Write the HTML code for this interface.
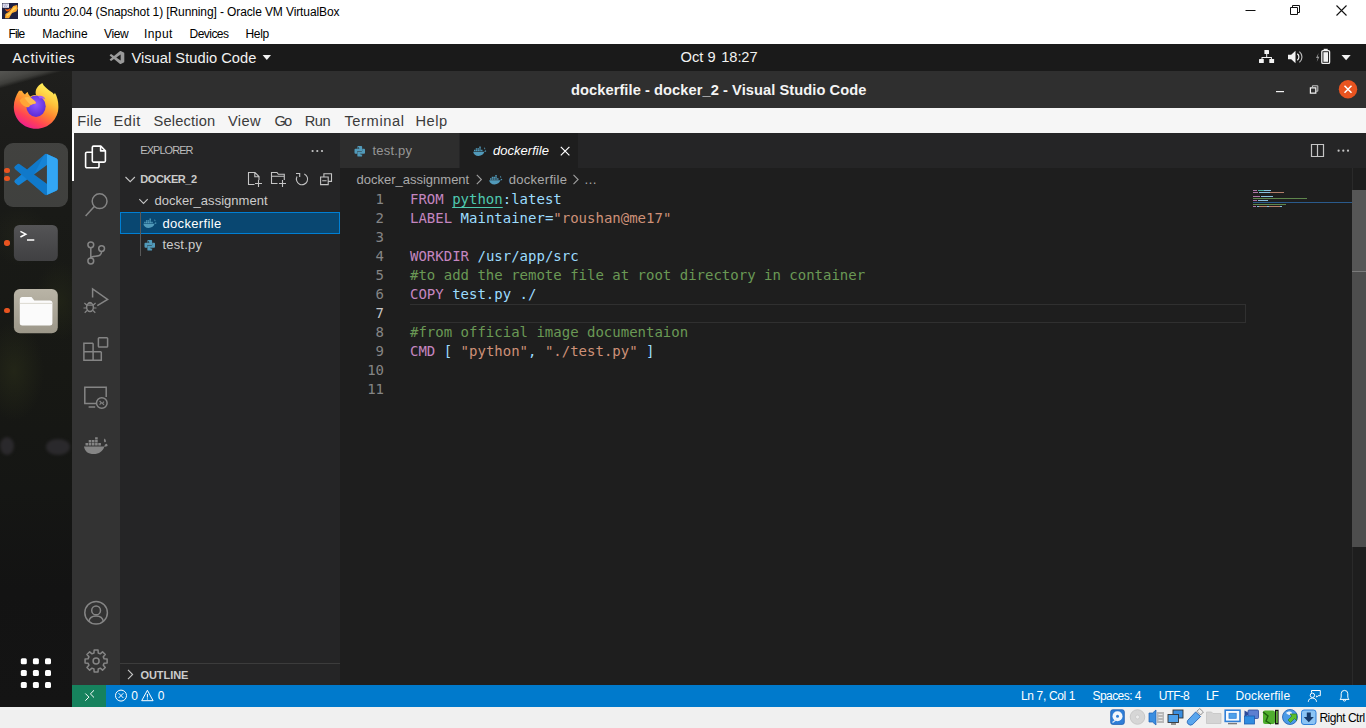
<!DOCTYPE html>
<html lang="en"><head><meta charset="utf-8"><title>ubuntu 20.04 - VirtualBox - Visual Studio Code</title>
<style>
html,body{margin:0;padding:0}
body{width:1366px;height:728px;position:relative;overflow:hidden;background:#1e1e1e;font-family:"Liberation Sans",sans-serif}
div,span,svg,i{position:absolute;box-sizing:border-box}
.t{white-space:pre;display:block}
.ic{display:block;overflow:visible}
/* VirtualBox chrome */
#vbtitle{left:0;top:0;width:1366px;height:44px;background:#fff}
#vbstatus{left:0;top:707px;width:1366px;height:21px;background:#f0f0f0}
/* Ubuntu */
#topbar{left:0;top:44px;width:1366px;height:27px;background:#1a1a1a}
#dock{left:0;top:71px;width:72px;height:636px;background:radial-gradient(ellipse 30px 50px at 14px 300px,rgba(44,48,26,.55),rgba(44,48,26,0)),radial-gradient(ellipse 26px 40px at 60px 230px,rgba(40,44,24,.5),rgba(40,44,24,0)),radial-gradient(ellipse 30px 30px at 20px 165px,rgba(40,42,28,.4),rgba(40,42,28,0)),linear-gradient(164.5deg,#555552 0,#484845 9px,#3c3c39 13px,rgba(30,30,28,0) 17px),linear-gradient(180deg,#1f1f1d 0px,#1c1c1a 60px,#191a17 140px,#171814 300px,#151614 420px,#131313 520px,#141414 636px)}
#dock .leaf{background:#302e32;opacity:.8;border-radius:50%;filter:blur(1.5px)}
#dock .tile{left:4px;top:72px;width:64px;height:64px;border-radius:9px;background:rgba(255,255,255,.17)}
.dot{width:5.4px;height:5.4px;border-radius:50%;background:#e95420}
/* VS Code window */
#titlebar{left:72px;top:71px;width:1294px;height:37px;background:#2f2f2f}
#menubar{left:72px;top:108px;width:1294px;height:25px;background:#f6f6f6}
#activity{left:72px;top:133px;width:48px;height:552px;background:#333333}
#activity .sel{left:0;top:0;width:2px;height:48px;background:#fff}
#sidebar{left:120px;top:133px;width:220px;height:552px;background:#252526}
#selrow{left:120px;top:212px;width:220px;height:22px;background:#094771;border:1px solid #007fd4}
#guide{left:140px;top:212px;width:1px;height:44px;background:#585858}
#outline-sep{left:120px;top:663px;width:220px;height:1px;background:#3c3c3c}
#tabbar{left:340px;top:133px;width:1026px;height:35px;background:#252526}
#tab1{left:340px;top:133px;width:120px;height:35px;background:#2d2d2d;border-right:1px solid #252526}
#tab2{left:460px;top:133px;width:118px;height:35px;background:#1e1e1e}
#editor{left:340px;top:168px;width:1026px;height:517px;background:#1e1e1e}
#curline{left:410px;top:304px;width:836px;height:19px;border:1px solid #303030;border-left:none}
#vscroll{left:1352px;top:190px;width:14px;height:357px;background:#4d4d4d}
#vscroll i{left:0;top:0;width:14px;height:82px;background:#565656;border-bottom:1px solid #7a7a7a}
#vline{left:1352px;top:168px;width:1px;height:517px;background:#2a2a2a}
#statusbar{left:72px;top:685px;width:1294px;height:22px;background:#007acc}
#remote{left:72px;top:685px;width:34px;height:22px;background:#16825d}
/* code */
.ln{left:340px;width:44px;height:19px;text-align:right;font:14px/19px "DejaVu Sans Mono","Liberation Mono",monospace;color:#858585}
.ln.cur{color:#c6c6c6}
.cl{left:410px;height:19px;white-space:pre;font:14px/19px "DejaVu Sans Mono","Liberation Mono",monospace;color:#d4d4d4}
.cl span{position:static}
.k{color:#c586c0}.u{color:#4ec9b0;text-decoration:underline;text-underline-offset:3px}.v{color:#9cdcfe}.s{color:#ce9178}.c{color:#6a9955}
.mm i{height:1px;opacity:.85}
.mmcur{left:1253px;top:202px;width:99px;height:1px;background:#2a5a8c}
</style></head>
<body>
<div id="vbtitle"></div>
<div id="topbar"></div>
<div id="dock"><div class="tile"></div><div class="leaf" style="left:0;top:366px;width:14px;height:18px"></div><div class="leaf" style="left:46px;top:368px;width:24px;height:16px"></div></div>
<div id="titlebar"></div>
<div id="menubar"></div>
<div id="activity"><div class="sel"></div></div>
<div id="sidebar"></div>
<div id="selrow"></div>
<div id="guide"></div>
<div id="outline-sep"></div>
<div id="tabbar"></div>
<div id="tab1"></div>
<div id="tab2"></div>
<div id="editor"></div>
<div id="curline"></div>
<div id="vline"></div>
<div id="vscroll"><i></i></div>
<div id="statusbar"></div>
<div id="remote"></div>
<div id="vbstatus"></div>
<div class="mm"><i style="left:1253.0px;top:190px;width:4.0px;background:#c586c0"></i><i style="left:1258.0px;top:190px;width:6.0px;background:#4ec9b0"></i><i style="left:1264.0px;top:190px;width:7.0px;background:#9cdcfe"></i><i style="left:1253.0px;top:192px;width:5.0px;background:#c586c0"></i><i style="left:1259.0px;top:192px;width:11.0px;background:#9cdcfe"></i><i style="left:1270.0px;top:192px;width:14.0px;background:#ce9178"></i><i style="left:1253.0px;top:196px;width:7.0px;background:#c586c0"></i><i style="left:1261.0px;top:196px;width:12.0px;background:#9cdcfe"></i><i style="left:1253.0px;top:198px;width:54.0px;background:#6a9955"></i><i style="left:1253.0px;top:200px;width:4.0px;background:#c586c0"></i><i style="left:1258.0px;top:200px;width:10.0px;background:#9cdcfe"></i><i style="left:1253.0px;top:204px;width:33.0px;background:#6a9955"></i><i style="left:1253.0px;top:206px;width:3.0px;background:#c586c0"></i><i style="left:1257.0px;top:206px;width:2.0px;background:#9cdcfe"></i><i style="left:1259.0px;top:206px;width:8.0px;background:#ce9178"></i><i style="left:1267.0px;top:206px;width:2.0px;background:#9cdcfe"></i><i style="left:1269.0px;top:206px;width:11.0px;background:#ce9178"></i><i style="left:1280.0px;top:206px;width:2.0px;background:#9cdcfe"></i></div>
<div class="mmcur"></div>
<div class="ln" style="top:190px">1</div>
<div class="cl" style="top:190px"><span class="k">FROM</span> <span class="u">python</span><span class="v">:latest</span></div>
<div class="ln" style="top:209px">2</div>
<div class="cl" style="top:209px"><span class="k">LABEL</span> <span class="v">Maintainer=</span><span class="s">&quot;roushan@me17&quot;</span></div>
<div class="ln" style="top:228px">3</div>
<div class="ln" style="top:247px">4</div>
<div class="cl" style="top:247px"><span class="k">WORKDIR</span> <span class="v">/usr/app/src</span></div>
<div class="ln" style="top:266px">5</div>
<div class="cl" style="top:266px"><span class="c">#to add the remote file at root directory in container</span></div>
<div class="ln" style="top:285px">6</div>
<div class="cl" style="top:285px"><span class="k">COPY</span> <span class="v">test.py ./</span></div>
<div class="ln cur" style="top:304px">7</div>
<div class="ln" style="top:323px">8</div>
<div class="cl" style="top:323px"><span class="c">#from official image documentaion</span></div>
<div class="ln" style="top:342px">9</div>
<div class="cl" style="top:342px"><span class="k">CMD</span> <span class="v">[ </span><span class="s">&quot;python&quot;</span><span class="v">, </span><span class="s">&quot;./test.py&quot;</span><span class="v"> ]</span></div>
<div class="ln" style="top:361px">10</div>
<div class="ln" style="top:380px">11</div>
<span class="t" style='left:23.60px;top:5px;font:normal 400 12px/14px "Liberation Sans", sans-serif;color:#000;letter-spacing:-0.106px'>ubuntu 20.04 (Snapshot 1) [Running] - Oracle VM VirtualBox</span>
<span class="t" style='left:8.50px;top:27px;font:normal 400 12px/14px "Liberation Sans", sans-serif;color:#000;letter-spacing:-0.854px'>File</span>
<span class="t" style='left:42.30px;top:27px;font:normal 400 12px/14px "Liberation Sans", sans-serif;color:#000;letter-spacing:0.003px'>Machine</span>
<span class="t" style='left:104.00px;top:27px;font:normal 400 12px/14px "Liberation Sans", sans-serif;color:#000;letter-spacing:-0.376px'>View</span>
<span class="t" style='left:144.00px;top:27px;font:normal 400 12px/14px "Liberation Sans", sans-serif;color:#000;letter-spacing:0.411px'>Input</span>
<span class="t" style='left:189.60px;top:27px;font:normal 400 12px/14px "Liberation Sans", sans-serif;color:#000;letter-spacing:-0.547px'>Devices</span>
<span class="t" style='left:245.50px;top:27px;font:normal 400 12px/14px "Liberation Sans", sans-serif;color:#000;letter-spacing:-0.335px'>Help</span>
<span class="t" style='left:12.30px;top:50px;font:normal 400 14.67px/16px "Liberation Sans", sans-serif;color:#f2f2f2;letter-spacing:0.501px'>Activities</span>
<span class="t" style='left:131.40px;top:50px;font:normal 400 14.67px/16px "Liberation Sans", sans-serif;color:#f2f2f2;letter-spacing:0.033px'>Visual Studio Code</span>
<span class="t" style='left:680.50px;top:49px;font:normal 400 14.67px/16px "Liberation Sans", sans-serif;color:#f2f2f2;letter-spacing:0.032px'>Oct 9</span>
<span class="t" style='left:721.30px;top:49px;font:normal 400 14.67px/16px "Liberation Sans", sans-serif;color:#f2f2f2;letter-spacing:-0.106px'>18:27</span>
<span class="t" style='left:571.00px;top:82px;font:normal 700 14.67px/16px "Liberation Sans", sans-serif;color:#f4f4f4;letter-spacing:0.061px'>dockerfile - docker_2 - Visual Studio Code</span>
<span class="t" style='left:77.20px;top:113px;font:normal 400 14.67px/16px "Liberation Sans", sans-serif;color:#3b3b3b;letter-spacing:0.312px'>File</span>
<span class="t" style='left:113.50px;top:113px;font:normal 400 14.67px/16px "Liberation Sans", sans-serif;color:#3b3b3b;letter-spacing:0.539px'>Edit</span>
<span class="t" style='left:153.50px;top:113px;font:normal 400 14.67px/16px "Liberation Sans", sans-serif;color:#3b3b3b;letter-spacing:0.170px'>Selection</span>
<span class="t" style='left:228.00px;top:113px;font:normal 400 14.67px/16px "Liberation Sans", sans-serif;color:#3b3b3b;letter-spacing:0.361px'>View</span>
<span class="t" style='left:274.40px;top:113px;font:normal 400 14.67px/16px "Liberation Sans", sans-serif;color:#3b3b3b;letter-spacing:-1.800px'>Go</span>
<span class="t" style='left:304.70px;top:113px;font:normal 400 14.67px/16px "Liberation Sans", sans-serif;color:#3b3b3b;letter-spacing:-0.418px'>Run</span>
<span class="t" style='left:344.40px;top:113px;font:normal 400 14.67px/16px "Liberation Sans", sans-serif;color:#3b3b3b;letter-spacing:0.611px'>Terminal</span>
<span class="t" style='left:415.40px;top:113px;font:normal 400 14.67px/16px "Liberation Sans", sans-serif;color:#3b3b3b;letter-spacing:0.503px'>Help</span>
<span class="t" style='left:140.30px;top:144px;font:normal 400 11px/12px "Liberation Sans", sans-serif;color:#bbbbbb;letter-spacing:-0.966px'>EXPLORER</span>
<span class="t" style='left:140.30px;top:173px;font:normal 700 11px/12px "Liberation Sans", sans-serif;color:#cccccc;letter-spacing:-0.441px'>DOCKER_2</span>
<span class="t" style='left:154.40px;top:193px;font:normal 400 13px/15px "Liberation Sans", sans-serif;color:#cccccc;letter-spacing:0.030px'>docker_assignment</span>
<span class="t" style='left:162.40px;top:216px;font:normal 400 13px/15px "Liberation Sans", sans-serif;color:#ffffff;letter-spacing:0.355px'>dockerfile</span>
<span class="t" style='left:162.40px;top:237px;font:normal 400 13px/15px "Liberation Sans", sans-serif;color:#cccccc;letter-spacing:0.201px'>test.py</span>
<span class="t" style='left:140.50px;top:669px;font:normal 700 11px/12px "Liberation Sans", sans-serif;color:#cccccc;letter-spacing:-0.073px'>OUTLINE</span>
<span class="t" style='left:372.50px;top:143px;font:normal 400 13px/15px "Liberation Sans", sans-serif;color:#969696;letter-spacing:0.201px'>test.py</span>
<span class="t" style='left:493.00px;top:143px;font:italic 400 13px/15px "Liberation Sans", sans-serif;color:#ffffff;letter-spacing:0.033px'>dockerfile</span>
<span class="t" style='left:356.50px;top:172px;font:normal 400 13px/15px "Liberation Sans", sans-serif;color:#a9a9a9;letter-spacing:-0.001px'>docker_assignment</span>
<span class="t" style='left:508.70px;top:172px;font:normal 400 13px/15px "Liberation Sans", sans-serif;color:#a9a9a9;letter-spacing:0.288px'>dockerfile</span>
<span class="t" style='left:584.00px;top:172px;font:normal 400 13px/15px "Liberation Sans", sans-serif;color:#a9a9a9;letter-spacing:0.000px'>…</span>
<span class="t" style='left:131.30px;top:689px;font:normal 400 12px/14px "Liberation Sans", sans-serif;color:#ffffff;letter-spacing:0.000px'>0</span>
<span class="t" style='left:157.70px;top:689px;font:normal 400 12px/14px "Liberation Sans", sans-serif;color:#ffffff;letter-spacing:0.000px'>0</span>
<span class="t" style='left:1021.00px;top:689px;font:normal 400 12px/14px "Liberation Sans", sans-serif;color:#ffffff;letter-spacing:-0.356px'>Ln 7, Col 1</span>
<span class="t" style='left:1092.50px;top:689px;font:normal 400 12px/14px "Liberation Sans", sans-serif;color:#ffffff;letter-spacing:-0.562px'>Spaces: 4</span>
<span class="t" style='left:1158.70px;top:689px;font:normal 400 12px/14px "Liberation Sans", sans-serif;color:#ffffff;letter-spacing:-0.756px'>UTF-8</span>
<span class="t" style='left:1206.00px;top:689px;font:normal 400 12px/14px "Liberation Sans", sans-serif;color:#ffffff;letter-spacing:-1.274px'>LF</span>
<span class="t" style='left:1235.40px;top:689px;font:normal 400 12px/14px "Liberation Sans", sans-serif;color:#ffffff;letter-spacing:0.147px'>Dockerfile</span>
<span class="t" style='left:1319.40px;top:711px;font:normal 400 12px/14px "Liberation Sans", sans-serif;color:#000;letter-spacing:-0.472px'>Right Ctrl</span>

<svg id="ov" class="ic" style="left:0;top:0" width="1366" height="728" viewBox="0 0 1366 728" fill="none" stroke-linecap="butt" stroke-linejoin="miter">
<!-- ===== Activity bar ===== -->
<g stroke="#ffffff" stroke-width="1.6" stroke-linejoin="round">
  <path d="M93.6 146.1h7.2l4.6 4.6v10.1a1.3 1.3 0 0 1-1.3 1.3h-10.5a1.3 1.3 0 0 1-1.3-1.3v-13.4a1.3 1.3 0 0 1 1.3-1.3z"/>
  <path d="M100.6 146.3v4.6h4.6"/>
  <path d="M92.2 152.2h-5.3a1.3 1.3 0 0 0-1.3 1.3v13a1.3 1.3 0 0 0 1.3 1.3h10.8a1.3 1.3 0 0 0 1.3-1.3v-4.2"/>
</g>
<g stroke="#858585" stroke-width="1.5">
  <!-- search -->
  <circle cx="99.6" cy="201.2" r="7.4"/>
  <path d="M94.3 206.6L85.6 215.9"/>
  <!-- scm -->
  <circle cx="90.8" cy="244.8" r="2.9"/><circle cx="101.6" cy="248.6" r="2.9"/><circle cx="90.8" cy="261" r="2.9"/>
  <path d="M90.8 247.7v10.4M101.6 251.5c0 3.6-3 4.7-6.2 4.7c-2.6 0-4.6 .4-4.6 2.4"/>
  <!-- debug -->
  <path d="M92.6 297.5v-8.6l15 10.5l-10.3 6.2"/>
  <ellipse cx="90" cy="307.3" rx="3.4" ry="4.2"/>
  <path d="M86.8 305.2h6.4M86.6 305l-2.2-2M93.4 305l2.2-2M86.5 308h-3M93.5 308h3M87 310.5l-2.3 2.2M93 310.5l2.3 2.2M88.2 303.6a1.9 1.9 0 0 1 3.6 0" stroke-width="1.2"/>
  <!-- extensions -->
  <path d="M93.1 343.2h-9.2v17h17.4v-8.4M93.1 343.2v17M83.9 351.8h17.4M93.1 351.8" />
  <rect x="98.4" y="337.8" width="9.2" height="9.2" rx="0.8"/>
  <!-- remote explorer -->
  <path d="M96.2 403.6H84.8v-16.3h21.4v9.8M88.6 407h6.6" />
  <circle cx="101.8" cy="403" r="5.3"/>
  <path d="M99.6 401l1.8 1.8l-1.8 1.8M104 401.6l-1.6 1.6l1.6 1.6" stroke-width="1.1"/>
  <!-- account -->
  <circle cx="96.100" cy="612.800" r="11.300"/>
  <circle cx="96.100" cy="610.400" r="4.400"/>
  <path d="M88.800 621.600c.6-3.600 3.300-5.600 7.300-5.600s6.700 2 7.300 5.600"/>
</g>
<!-- docker whale (activity) -->
<g fill="#858585" stroke="none" transform="translate(0 1)">
  <path d="M84 445.500h20.300c.3-1.700 1.100-2.500 2.500-2.800c.5 .700 .800 1.500 .800 2.400c-.9 .400-2.100 .600-3.300 .600c-1.400 4.600-5.200 7.300-10.600 7.300c-5.600 0-8.900-2.500-9.700-7.500z"/>
  <path d="M85.500 442h2.600v2.600h-2.600zM88.700 442h2.600v2.600h-2.600zM91.900 442h2.600v2.600h-2.600zM95.100 442h2.600v2.600h-2.600zM98.300 442h2.600v2.600h-2.600zM88.700 439h2.600v2.500h-2.600zM91.900 439h2.600v2.500h-2.600zM95.100 439h2.600v2.500h-2.600zM95.100 436.200h2.600v2.400h-2.600z"/>
  <path d="M104.500 441.200c-.8-1.200-.8-2.600 0-3.800c1.100 .900 1.600 2.200 1.300 3.700z"/>
</g>
<!-- gear -->
<g transform="translate(96.100 661)" stroke="#858585" stroke-width="1.500" stroke-linejoin="round">
  <circle r="3"/>
  <path d="M-2.13 -8.02L-1.95 -11.03L1.95 -11.03L2.13 -8.02L4.16 -7.18L6.42 -9.18L9.18 -6.42L7.18 -4.16L8.02 -2.13L11.03 -1.95L11.03 1.95L8.02 2.13L7.18 4.16L9.18 6.42L6.42 9.18L4.16 7.18L2.13 8.02L1.95 11.03L-1.95 11.03L-2.13 8.02L-4.16 7.18L-6.42 9.18L-9.18 6.42L-7.18 4.16L-8.02 2.13L-11.03 1.95L-11.03 -1.95L-8.02 -2.13L-7.18 -4.16L-9.18 -6.42L-6.42 -9.18L-4.16 -7.18Z"/>
</g>
<!-- ===== Sidebar ===== -->
<g fill="#c5c5c5" stroke="none">
  <circle cx="312.600" cy="151" r="1.1"/><circle cx="317.300" cy="151" r="1.1"/><circle cx="322" cy="151" r="1.1"/>
  <circle cx="1338.600" cy="150.700" r="1.1"/><circle cx="1343.300" cy="150.700" r="1.1"/><circle cx="1348" cy="150.700" r="1.1"/>
</g>
<g stroke="#c5c5c5" stroke-width="1.1">
  <path d="M125.500 177l4.700 4.700l4.700-4.700"/>
  <path d="M139.300 199.200l4.200 4.200l4.200-4.200"/>
  <path d="M128 669.800l4.600 4.700l-4.600 4.700"/>
  <!-- new file -->
  <path d="M254.500 184.500h-6v-12h6.500l4 4v3.500M254.800 172.600v4.200h4.100M258.500 180v7M255 183.500h7"/>
  <!-- new folder -->
  <path d="M277.500 183.500h-6v-11h5.500l1.300 1.800h6v5.800M271.500 176.300h12.800M282.500 180v7M279 183.500h7"/>
  <!-- refresh -->
  <path d="M304.300 174a5.600 5.600 0 1 1-7.300 2.600M296 173.500h3.700v3.400" />
  <!-- collapse all -->
  <path d="M320.600 177h7.600v7.600h-7.600zM323.900 176.800v-3h7.600v7.600h-3M322.200 180.800h4.400"/>
  <!-- tab close -->
  <path d="M560.800 146.800l8.600 8.600M569.400 146.800l-8.600 8.600" stroke="#ffffff" stroke-width="1.2"/>
  <!-- breadcrumb chevrons -->
  <path d="M476.800 174.800l4.600 4.700l-4.600 4.700M573.500 174.800l4.600 4.700l-4.600 4.700" stroke="#a0a0a0"/>
  <!-- split editor -->
  <path d="M1311.500 144.500h12v12h-12zM1317.500 144.500v12" stroke-width="1.200"/>
</g>


<defs>
  <symbol id="whale" viewBox="0 0 24 17" overflow="visible">
    <path d="M0 9.300h20.300c.3-1.700 1.100-2.500 2.500-2.800c.5 .700 .800 1.500 .800 2.400c-.9 .400-2.100 .600-3.300 .600c-1.400 4.600-5.200 7.300-10.600 7.300c-5.600 0-8.900-2.500-9.700-7.500z"/>
    <path d="M1.500 5.800h2.600v2.600h-2.600zM4.700 5.800h2.600v2.600h-2.600zM7.900 5.800h2.600v2.600h-2.600zM11.100 5.800h2.600v2.600h-2.600zM14.300 5.800h2.600v2.600h-2.600zM4.700 2.800h2.600v2.500h-2.600zM7.900 2.800h2.600v2.500h-2.600zM11.100 2.800h2.600v2.500h-2.600zM11.100 0h2.600v2.400h-2.600z"/>
    <path d="M20.500 5c-.8-1.200-.8-2.600 0-3.800c1.100 .900 1.600 2.200 1.300 3.700z"/>
  </symbol>
  <symbol id="py" viewBox="0 0 11 11" overflow="visible">
    <path d="M3 .9Q3 0 3.900 0H7.100Q8 0 8 .9V4.400Q8 5.300 7.100 5.300H3.800Q2.900 5.300 2.900 6.200V8H.9Q0 8 0 7.100V3.900Q0 3 .9 3H5.400V2.500H3ZM4 1.400A.55 .55 0 1 0 4.010 1.400Z" fill-rule="evenodd"/>
    <path d="M8 10.100Q8 11 7.100 11H3.900Q3 11 3 10.100V6.600Q3 5.700 3.900 5.700H7.200Q8.100 5.700 8.100 4.800V3H10.100Q11 3 11 3.900V7.100Q11 8 10.100 8H5.600V8.500H8ZM7 9.600A.55 .55 0 1 0 6.990 9.600Z" fill-rule="evenodd"/>
  </symbol>
  <linearGradient id="ffg" x1="0.78" y1="0.08" x2="0.3" y2="0.98">
    <stop offset="0" stop-color="#fff05a"/><stop offset=".3" stop-color="#ffc03a"/><stop offset=".55" stop-color="#ff8330"/><stop offset=".8" stop-color="#ff4156"/><stop offset="1" stop-color="#ee1f8e"/>
  </linearGradient>
  <radialGradient id="ffp" cx=".5" cy=".4" r=".6"><stop offset="0" stop-color="#9059ff"/><stop offset="1" stop-color="#5b2bd6"/></radialGradient>
  <linearGradient id="termg" x1="0" y1="0" x2="0" y2="1"><stop offset="0" stop-color="#545456"/><stop offset="1" stop-color="#404042"/></linearGradient>
  <linearGradient id="filesg" x1="0" y1="0" x2="0" y2="1"><stop offset="0" stop-color="#b9b4a6"/><stop offset="1" stop-color="#9c9789"/></linearGradient>
</defs>
<!-- file icons -->
<g fill="#519aba" stroke="none">
  <use href="#whale" x="143" y="218.600" width="14" height="9.400"/>
  <use href="#whale" x="472.800" y="146.600" width="14" height="9.400"/>
  <use href="#whale" x="488.800" y="175.100" width="14" height="9.400"/>
  <use href="#py" x="144.500" y="240" width="10.500" height="10.500"/>
  <use href="#py" x="354.500" y="146" width="10.500" height="10.500"/>
</g>
<!-- ===== VirtualBox title ===== -->
<g>
  <rect x="2" y="3" width="16" height="16" fill="#1f2142"/>
  <path d="M5 18.300l.400-4.300l3.600-2.200l3.200-4.300l1-1.500l3.900-1l.700 3.500l-1.500 3l-4.200 1.500l-2 3.200l-1 2.100z" fill="#ffab2e"/>
  <path d="M6.500 16.500l.5-2l3-1.800l3.500-5l2.200-.8l.3 1.500l-3.500 2.500l-2.500 3.600z" fill="#ffd45c"/>
  <path d="M4.800 8.400q2.700 2.600 5.900-.6q-.4 3.700-3 3.600q-2.200-.2-2.900-3z" fill="#f2600e"/>
  <rect x="2.500" y="3.500" width="6.500" height="4.300" fill="#ececf4"/>
  <path d="M3.500 5h4.500M4.200 6.300h3" stroke="#6a6aa8" stroke-width=".7" stroke-dasharray="1 .6"/>
</g>
<g stroke="#111" stroke-width="1">
  <path d="M1245.500 10.500h10"/>
  <path d="M1290.500 7.500h7v7h-7zM1292.500 7.500v-2h7v7h-2"/>
  <path d="M1336.500 5.500l10 10M1346.500 5.500l-10 10" stroke-width="1.100"/>
</g>
<!-- ===== Ubuntu top bar ===== -->
<g transform="translate(109.700 51) scale(.146 .13)" fill="#9a9a9a">
  <path d="M96.460 10.800L75.860.870a6.230 6.230 0 0 0-7.100 1.210L29.350 38.040 12.190 25.010a4.160 4.160 0 0 0-5.320.240L1.370 30.260a4.170 4.170 0 0 0 0 6.160L16.250 50 1.370 63.580a4.170 4.170 0 0 0 0 6.160l5.500 5.010a4.160 4.160 0 0 0 5.320.240l17.160-13.030 39.410 35.960a6.220 6.220 0 0 0 7.100 1.210l20.600-9.910A6.250 6.250 0 0 0 100 83.590V16.410a6.250 6.250 0 0 0-3.540-5.610zM75.020 72.700L45.110 50l29.910-22.700z"/>
</g>
<path d="M262.600 55h8.400l-4.200 5z" fill="#f2f2f2"/>
<g fill="#f2f2f2">
  <rect x="1264.400" y="50" width="4.600" height="4" rx=".5"/>
  <rect x="1259" y="59" width="4.800" height="4" rx=".5"/>
  <rect x="1269.300" y="59" width="4.800" height="4" rx=".5"/>
  <path d="M1266.200 54h1v3h4.700v2h-1v-1h-8.400v1h-1v-2h4.700z"/>
  <!-- volume -->
  <path d="M1288 54.700h3.200l4.300-3.900v12.400l-4.300-3.900H1288z"/>
</g>
<g stroke="#f2f2f2" stroke-width="1.200" fill="none">
  <path d="M1297.300 53.800a4 4 0 0 1 0 6.400"/>
  <path d="M1299.400 51.600a7 7 0 0 1 0 10.800" stroke="#b8b8b8"/>
  <!-- battery -->
  <rect x="1321.800" y="50.600" width="7.800" height="12.800" rx="1.200" stroke-width="1.300"/>
</g>
<rect x="1323.700" y="48.800" width="4" height="1.500" fill="#f2f2f2"/>
<rect x="1323.400" y="52.200" width="4.600" height="9.600" fill="#f2f2f2"/>
<path d="M1318.600 53l-2.600 5h1.700l-1 4l2.700-5.200h-1.700z" fill="#9a9a9a"/>
<path d="M1341.500 55h9.200l-4.600 5.200z" fill="#f2f2f2"/>
<!-- ===== VS Code window controls ===== -->
<g stroke="#f2f2f2" stroke-width="1.200" fill="none">
  <path d="M1276 91.600h8"/>
  <path d="M1310.400 87.800h5.400v5.400h-5.400z"/>
  <path d="M1312.400 87.600v-1.800h5.400v5.400h-1.800" stroke="#c8c8c8" stroke-width="1"/>
</g>
<circle cx="1348" cy="89.200" r="9.200" fill="#e95420"/>
<path d="M1344.500 85.700l7 7M1351.500 85.700l-7 7" stroke="#fff" stroke-width="1.500"/>
<!-- ===== Dock ===== -->
<g>
  <!-- firefox -->
  <path d="M22 90.800c.8 1.800 1.800 3 3 3.800c.6-1.200 1.600-2.100 2.800-2.600c.3 2 1.200 3.400 2.600 4.400c1.700-.9 3.600-1.300 5.600-1.300c-1.300-4.700 .800-9 6.300-12.100c1.300 3.300 5.400 6.300 9.900 9.500c.5 .300 1.200 1.200 1.600 1.900c.5-.3 .9-.900 1.100-1.600c2.300 3.800 3.500 8.500 3.500 14.200c0 12-9.600 21.800-22.300 21.800c-12.500 0-22.300-9.700-22.300-21.800c0-6.500 2.300-11.600 5.200-16.200z" fill="url(#ffg)"/>
  <ellipse cx="36" cy="106.300" rx="9.700" ry="10.700" fill="url(#ffp)"/>
  <path d="M19.600 100.400c2.400-3.300 6.600-4.600 10.400-3.400l4.800 3.900c1.500 1.200 1.300 2.600-.4 2.800c-2.400 .300-4.400 1.400-5.400 3.400c-3.600 .400-7.400-1.900-9.400-6.700z" fill="#ffa436"/>
  <path d="M24.500 97.700c2.200-.9 4.400-.8 6.200 0l4.100 3.200c1.500 1.200 1.300 2.600-.4 2.800c-1.200 .1-2.300 .5-3.200 1.100c-2.500-1.800-5-4.100-6.700-7.100z" fill="#ffbd4f"/>
  <path d="M38 96.300c3-1.200 6.300 .200 7.300 3.200c-1.700-1.300-3.700-1.600-5.600-1c-.4-.9-1-1.700-1.700-2.200z" fill="#a45cf5"/>
  <!-- vscode -->
  <g transform="translate(14.400 153.800) scale(.434 .414)">
    <path d="M96.460 10.800L75.860.870a6.230 6.230 0 0 0-7.100 1.210L29.350 38.040 12.190 25.010a4.160 4.160 0 0 0-5.320.240L1.370 30.260a4.170 4.170 0 0 0 0 6.160L16.250 50 1.370 63.580a4.170 4.170 0 0 0 0 6.160l5.500 5.010a4.160 4.160 0 0 0 5.320.240l17.160-13.030 39.410 35.960a6.220 6.220 0 0 0 7.100 1.210l20.600-9.910A6.250 6.250 0 0 0 100 83.590V16.410a6.250 6.250 0 0 0-3.540-5.610zM75.020 72.700L45.110 50l29.910-22.700z" fill="#1583d6"/>
    <path d="M75.020 27.300v45.400l0 26.400c.3 0 .6-.1.840-.22l20.600-9.910A6.250 6.250 0 0 0 100 83.590V16.410a6.250 6.250 0 0 0-3.540-5.610L75.860.870a6 6 0 0 0-.84-.3z" fill="#33a6f4"/>
    <path d="M68.760 2.080L29.350 38.040 12.190 25.010a4.160 4.160 0 0 0-5.320.240L1.370 30.260a4.170 4.170 0 0 0 0 6.160L68.760 97.920a6.220 6.220 0 0 0 6.260 1.300V72.700L45.110 50z" fill="#0a68b4" opacity=".35"/>
  </g>
  <!-- terminal -->
  <rect x="13.900" y="225" width="43.900" height="36" rx="5.500" fill="url(#termg)"/>
  <path d="M20.400 231.400l5.400 2.800l-5.400 2.800" stroke="#fff" stroke-width="1.500" fill="none"/>
  <path d="M27 240h7.300" stroke="#fff" stroke-width="1.500"/>
  <!-- files -->
  <rect x="13.900" y="289" width="43.900" height="44.200" rx="6" fill="url(#filesg)"/>
  <path d="M19.800 299.500a2.500 2.500 0 0 1 2.500-2.500h9.200l2.800 3.400h15.600a2.500 2.500 0 0 1 2.500 2.500v20.100a2.500 2.500 0 0 1-2.500 2.500h-27.600a2.500 2.500 0 0 1-2.500-2.500z" fill="#fbfbfb"/>
  <path d="M19.800 303.400h32.600" stroke="#dcd9d0" stroke-width="1"/>
  <!-- app grid -->
  <g fill="#fff">
    <rect x="20.800" y="658.300" width="6" height="6" rx="1.500"/><rect x="32.900" y="658.300" width="6" height="6" rx="1.500"/><rect x="45" y="658.300" width="6" height="6" rx="1.500"/>
    <rect x="20.800" y="670" width="6" height="6" rx="1.500"/><rect x="32.900" y="670" width="6" height="6" rx="1.500"/><rect x="45" y="670" width="6" height="6" rx="1.500"/>
    <rect x="20.800" y="682" width="6" height="6" rx="1.500"/><rect x="32.900" y="682" width="6" height="6" rx="1.500"/><rect x="45" y="682" width="6" height="6" rx="1.500"/>
  </g>
</g>
<!-- ===== Status bar icons ===== -->
<g stroke="#fff" stroke-width="1" fill="none">
  <path d="M85.300 693.500l3.600 3.600l-3.600 3.600M94 690.300l-3.600 3.600l3.600 3.600"/>
  <circle cx="121" cy="695.600" r="5.500"/>
  <path d="M118.600 693.200l4.800 4.800M123.400 693.200l-4.800 4.800"/>
  <path d="M147.400 690.300l5.700 10.400h-11.400z" stroke-linejoin="round"/>
  <path d="M147.400 694v3.600M147.400 698.400v1.200"/>
  <!-- feedback -->
  <path d="M1311.500 692.600v-2.100h8.800v5.200h-2.200l-1.500 1.500v-1.500"/>
  <circle cx="1312.400" cy="695.300" r="2.200"/>
  <path d="M1308.300 701.800c.2-2.400 1.600-3.700 4.100-3.700s3.900 1.300 4.100 3.700"/>
  <!-- bell -->
  <path d="M1340 699.400h9c-1-1-1.200-1.900-1.200-3.400v-2.300a3.300 3.300 0 0 0-6.600 0v2.300c0 1.500-.2 2.400-1.200 3.400zM1343.200 699.800a1.300 1.300 0 0 0 2.600 0"/>
</g>
<!-- ===== VirtualBox status icons ===== -->
<g>
  <!-- hdd -->
  <rect x="1110.700" y="709.800" width="13.600" height="14.600" rx="2" fill="#2f7fd8" stroke="#1b5cb0" stroke-width=".8"/>
  <circle cx="1117.500" cy="716.300" r="5" fill="#f2f6fb"/><circle cx="1117.500" cy="716.300" r="1.500" fill="#2f7fd8"/>
  <path d="M1112.500 722.500l4-3" stroke="#dfe9f6" stroke-width="1.200"/>
  <!-- cd -->
  <circle cx="1137.500" cy="717" r="7.300" fill="#d6d6d6" stroke="#c2c2c2" stroke-width=".8"/><circle cx="1137.500" cy="717" r="2" fill="#ececec" stroke="#c2c2c2" stroke-width=".6"/>
  <!-- audio -->
  <path d="M1149 713h3.500l3.500-3v15l-3.500-3h-3.500z" fill="#3a8ee0" stroke="#1b5cb0" stroke-width=".7"/>
  <rect x="1157" y="712" width="7" height="11" fill="#b8b8b8"/>
  <path d="M1158.500 714.500h4M1158.500 717.500h4M1158.500 720.500h4" stroke="#e6e6e6" stroke-width="1"/>
  <!-- network -->
  <rect x="1173" y="710" width="10" height="8" fill="#3a8ee0" stroke="#333" stroke-width=".9"/>
  <rect x="1168" y="714.500" width="10.500" height="8" fill="#4ea0ea" stroke="#333" stroke-width=".9"/>
  <path d="M1171 724h5" stroke="#333" stroke-width="1"/>
  <!-- usb -->
  <path d="M1187.600 720.500l8-8.500l5 4.500l-8 8q-2.500 1.500-4.500-.5q-1.600-1.800-.5-3.500z" fill="#5aa6ee" stroke="#1b5cb0" stroke-width=".8"/>
  <path d="M1196.800 711.200l3-2.600l3.600 3.400l-2.800 3z" fill="#eeeeee" stroke="#555" stroke-width=".6"/>
  <!-- shared folder (grey) -->
  <path d="M1206.500 712h5l1.500 1.500h8v10h-14.500z" fill="#d4d4d4" stroke="#c0c0c0" stroke-width=".7"/>
  <!-- display -->
  <rect x="1225.200" y="710.200" width="14.800" height="11.200" fill="#f4f8fd" stroke="#2f7fd8" stroke-width="1.600"/>
  <rect x="1229" y="713.300" width="7.200" height="5" fill="#4ea0ea" stroke="#2f7fd8" stroke-width=".8"/>
  <path d="M1228 723.600h9" stroke="#7a7a7a" stroke-width="1.400"/>
  <!-- recording -->
  <rect x="1248" y="710" width="10.500" height="8.500" rx="1" fill="#5d7fd0" stroke="#2c4a9a" stroke-width=".8"/>
  <path d="M1248 712.500l-3.500-2v6.500l3.500-2z" fill="#2c4a9a"/>
  <rect x="1244.500" y="716" width="10" height="8" fill="#2f8ce0" stroke="#1b5cb0" stroke-width=".8"/>
  <!-- cpu green -->
  <rect x="1263" y="710.500" width="12" height="13.500" rx="2" fill="#4fae2e"/>
  <path d="M1263 712l5 4l-2 5l5 3" stroke="#1e5e10" stroke-width="1.400" fill="none"/>
  <rect x="1275" y="709.800" width="3.600" height="14.600" fill="#111"/>
  <rect x="1276.200" y="711" width="1.400" height="12" fill="#6fd040"/>
  <!-- mouse -->
  <circle cx="1290" cy="717" r="7.500" fill="#4a9ae6" stroke="#1b5cb0" stroke-width=".8"/>
  <path d="M1286 713c2-2 5-2 6 0c-1 2-3 3-6 0z" fill="#e8f1fb"/>
  <path d="M1288 720l4-4l-2-2h6.500v6.500l-2-2l-4 4z" fill="#5cc02e" stroke="#2c7a12" stroke-width=".6"/>
  <!-- keyboard -->
  <rect x="1301.500" y="710" width="14.500" height="14.500" rx="2.500" fill="#8cc4f4" stroke="#2f7fd8" stroke-width="1"/>
  <path d="M1306.800 712.500h4v4.500h3l-5 5.200l-5-5.200h3z" fill="#173a6a"/>
</g>
</svg>

<div class="dot" style="left:4.300px;top:167.9px"></div>
<div class="dot" style="left:4.300px;top:175.8px"></div>
<div class="dot" style="left:4.300px;top:240.4px"></div>
<div class="dot" style="left:4.300px;top:308.0px"></div>

</body></html>
